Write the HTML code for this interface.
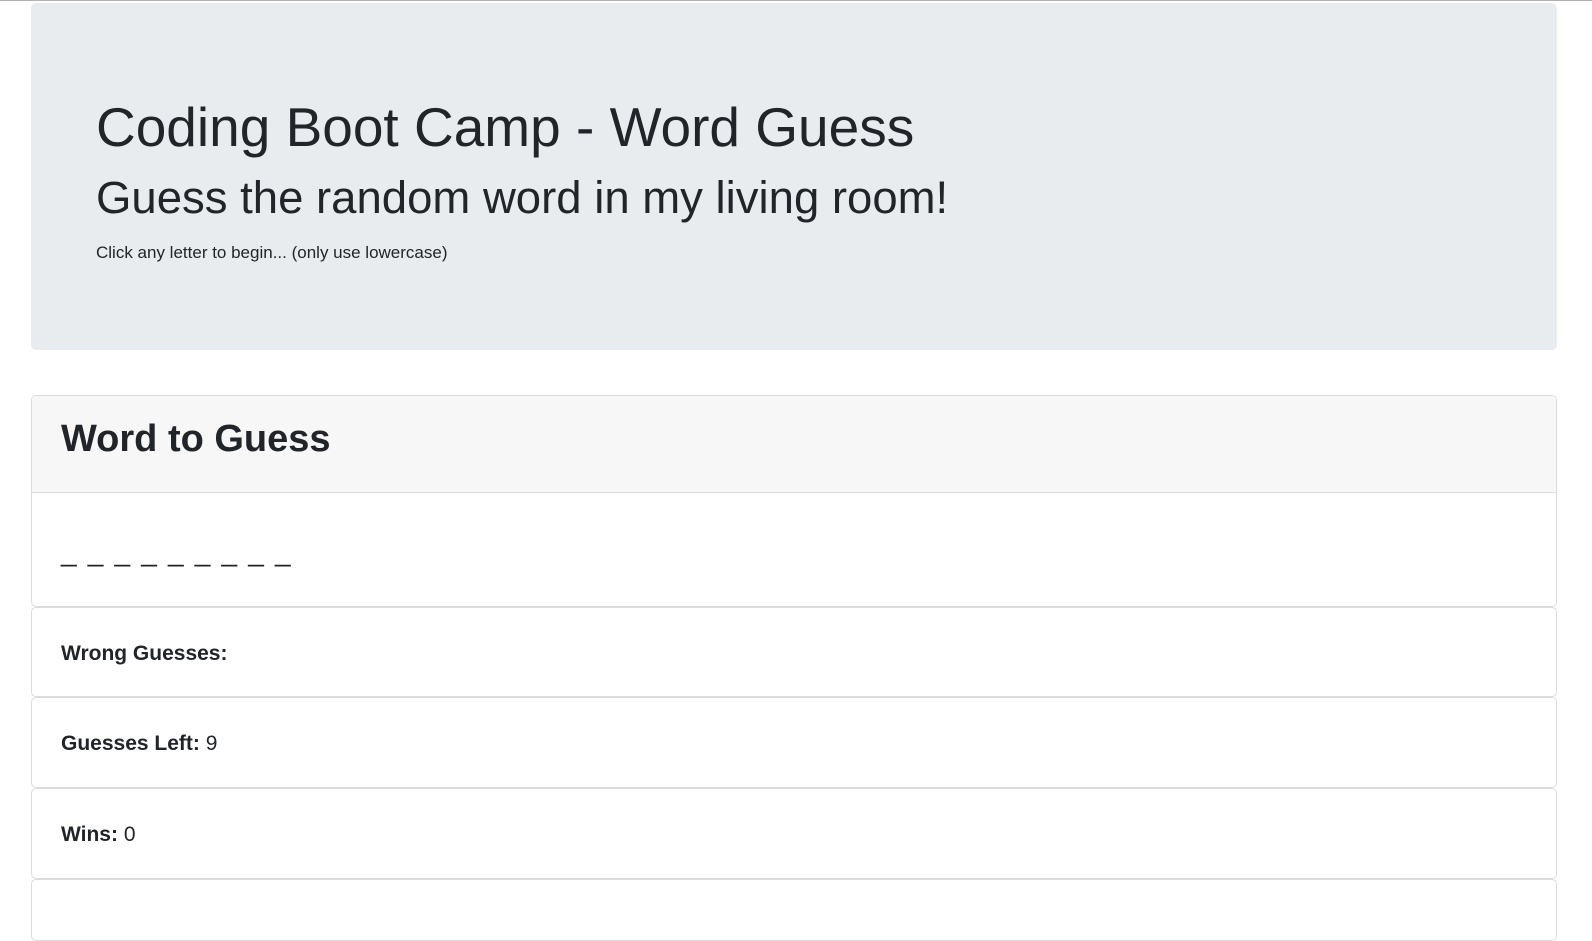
<!DOCTYPE html>
<html><head><style>
body{margin:0;background:#fff;font-family:"Liberation Sans",sans-serif;color:#212529;width:1592px;height:904px;overflow:hidden;position:relative}
.top{position:absolute;left:0;top:0;width:1592px;height:1px;background:#b0b0b0}
.jumbo{position:absolute;left:31px;top:3px;width:1526px;height:347px;background:#e9ecef;border-radius:5px}
.jumbo h1{position:absolute;left:65px;top:97px;margin:0;font-size:55px;font-weight:400;white-space:nowrap;line-height:1}
.jumbo h2{position:absolute;left:65px;top:172px;margin:0;font-size:45.5px;font-weight:400;white-space:nowrap;line-height:1}
.jumbo p{position:absolute;left:65px;top:240px;margin:0;font-size:17px}
.card{position:absolute;left:31px;width:1524px;border:1px solid #dcdcdc;border-radius:5px;background:#fff}
.hdr{height:96px;background:#f7f7f7;border-bottom:1px solid #dcdcdc;border-radius:5px 5px 0 0}
.hdr span{position:absolute;left:29px;top:22px;font-size:38px;font-weight:700}
.t{position:absolute;left:29px;font-size:21px}
</style></head><body>
<div class="top"></div>
<div class="jumbo">
<h1>Coding Boot Camp - Word Guess</h1>
<h2>Guess the random word in my living room!</h2>
<p>Click any letter to begin... (only use lowercase)</p>
</div>
<div class="card" style="top:395px;height:210px"><div class="hdr"><span>Word to Guess</span></div>
<div class="t" style="top:140px;font-size:28px;letter-spacing:1.7px">_ _ _ _ _ _ _ _ _</div></div>
<div class="card" style="top:607px;height:88px"><div class="t" style="top:34px"><b>Wrong Guesses:</b></div></div>
<div class="card" style="top:697px;height:89px"><div class="t" style="top:34px"><b>Guesses Left:</b> 9</div></div>
<div class="card" style="top:788px;height:89px"><div class="t" style="top:34px"><b>Wins:</b> 0</div></div>
<div class="card" style="top:879px;height:60px"></div>
</body></html>
